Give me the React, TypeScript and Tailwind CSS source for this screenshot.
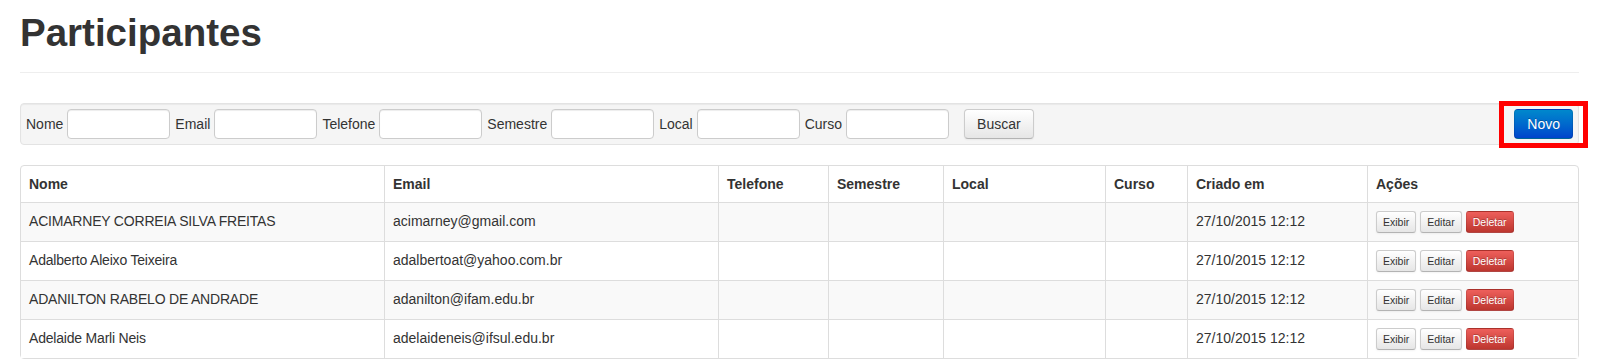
const rows = [
  { nome: "ACIMARNEY CORREIA SILVA FREITAS", email: "acimarney@gmail.com" },
  { nome: "Adalberto Aleixo Teixeira", email: "adalbertoat@yahoo.com.br" },
  { nome: "ADANILTON RABELO DE ANDRADE", email: "adanilton@ifam.edu.br" },
  { nome: "Adelaide Marli Neis", email: "adelaideneis@ifsul.edu.br" },
];

const filtros = ["Nome", "Email", "Telefone", "Semestre", "Local", "Curso"];

const btnMini =
  "inline-flex h-[22px] items-center rounded-[3px] border px-[6px] text-[10.5px] leading-5";
const btnDefault =
  "border-[#ccc] border-b-[#b3b3b3] bg-linear-to-b from-white to-[#e6e6e6] text-[#333] shadow-[inset_0_1px_0_rgba(255,255,255,0.2),0_1px_2px_rgba(0,0,0,0.05)]";
const btnDanger =
  "border-[rgba(0,0,0,0.1)] border-b-[rgba(0,0,0,0.25)] bg-linear-to-b from-[#ee5f5b] to-[#bd362f] text-white [text-shadow:0_-1px_0_rgba(0,0,0,0.25)]";

export default function App() {
  return (
    <div
      className="min-h-screen bg-white px-5 text-[14px] leading-5 text-[#333]"
      style={{ fontFamily: '"Liberation Sans", Arial, sans-serif' }}
    >
      <div className="border-b border-[#eee] pb-[9px]">
        <h1 className="mt-[13px] mb-[10px] text-[38.5px] font-bold leading-[40px]">
          Participantes
        </h1>
      </div>

      <div className="mt-[30px] flex items-center rounded-[4px] border border-[#e3e3e3] bg-[#f5f5f5] p-[5px] shadow-[inset_0_1px_1px_rgba(0,0,0,0.05)]">
        {filtros.map((f, i) => (
          <div key={f} className={"flex items-center " + (i > 0 ? "ml-[5px]" : "")}>
            <label>{f}</label>
            <input
              type="text"
              className="ml-1 h-[30px] w-[103px] rounded-[4px] border border-[#ccc] bg-white px-[6px] shadow-[inset_0_1px_1px_rgba(0,0,0,0.075)] outline-none"
            />
          </div>
        ))}
        <button
          className={
            "ml-[15px] inline-flex h-[30px] items-center rounded-[4px] border px-3 text-[14px] " +
            btnDefault
          }
        >
          Buscar
        </button>
        <div className="relative ml-auto">
          <button className="inline-flex h-[30px] items-center rounded-[4px] border border-[rgba(0,0,0,0.1)] border-b-[rgba(0,0,0,0.25)] bg-linear-to-b from-[#0088cc] to-[#0044cc] px-3 text-[14px] text-white [text-shadow:0_-1px_0_rgba(0,0,0,0.25)]">
            Novo
          </button>
          <span className="pointer-events-none absolute -top-[8px] -right-[15px] -bottom-[9px] -left-[15px] border-[5px] border-[#ff0000]" />
        </div>
      </div>

      <table className="mt-5 w-full table-fixed border-separate border-spacing-0 rounded-[4px] border border-[#ddd]">
        <thead>
          <tr>
            {[
              ["Nome", "w-[363px]"],
              ["Email", "w-[334px]"],
              ["Telefone", "w-[110px]"],
              ["Semestre", "w-[115px]"],
              ["Local", "w-[162px]"],
              ["Curso", "w-[82px]"],
              ["Criado em", "w-[180px]"],
              ["Ações", ""],
            ].map(([h, w], i) => (
              <th
                key={h}
                className={
                  "p-2 text-left align-top font-bold " +
                  w +
                  (i > 0 ? " border-l border-[#ddd]" : "")
                }
              >
                {h}
              </th>
            ))}
          </tr>
        </thead>
        <tbody>
          {rows.map((r, idx) => {
            const cells = [r.nome, r.email, "", "", "", "", "27/10/2015 12:12"];
            return (
              <tr key={r.email} className={idx % 2 === 0 ? "bg-[#f9f9f9]" : "bg-white"}>
                {cells.map((c, i) => (
                  <td
                    key={i}
                    className={
                      "border-t border-[#ddd] p-2 align-top " +
                      (i > 0 ? "border-l " : "") +
                      (i === 0 ? "tracking-[-0.2px]" : "")
                    }
                  >
                    {c}
                  </td>
                ))}
                <td className="border-t border-l border-[#ddd] p-2 align-top">
                  <div className="flex gap-1">
                    <button className={btnMini + " " + btnDefault}>Exibir</button>
                    <button className={btnMini + " " + btnDefault}>Editar</button>
                    <button className={btnMini + " " + btnDanger}>Deletar</button>
                  </div>
                </td>
              </tr>
            );
          })}
        </tbody>
      </table>
    </div>
  );
}
